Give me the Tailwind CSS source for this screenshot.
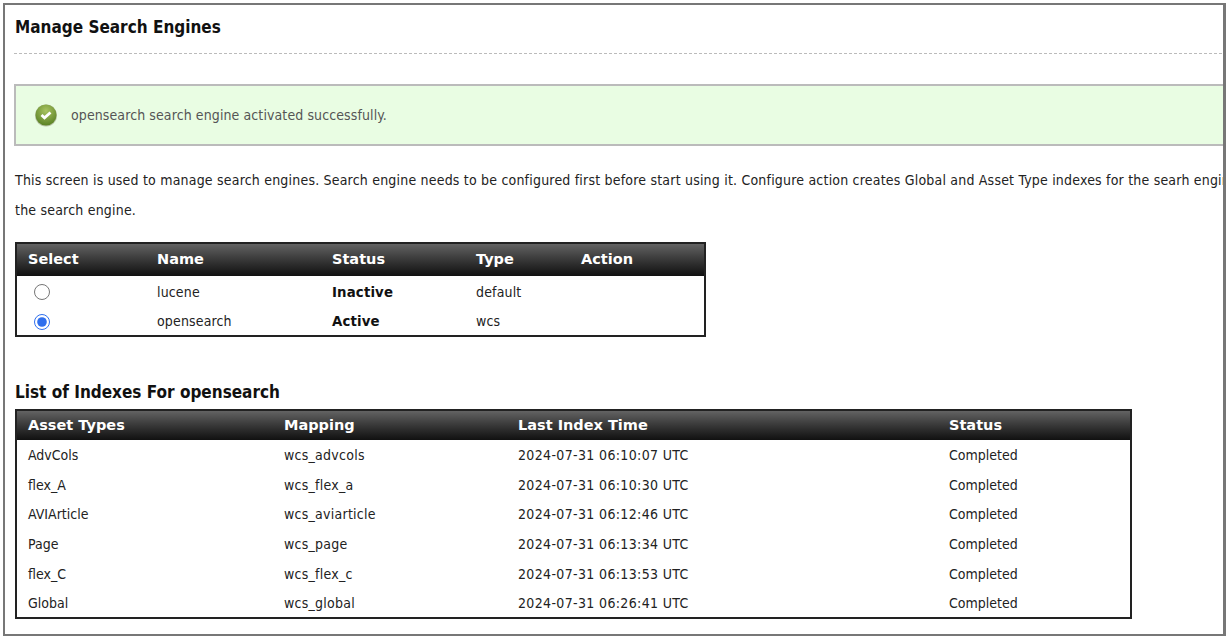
<!DOCTYPE html>
<html lang="en">
<head>
  <meta charset="UTF-8">
  <title>Manage Search Engines</title>
  <script src="https://cdn.jsdelivr.net/npm/@tailwindcss/browser@4"></script>
</head>
<body class="bg-white text-[#222] font-['DejaVu_Sans_Condensed','Liberation_Sans',sans-serif] text-[14px]">
  <!-- Frame -->
  <div class="ml-[3px] mt-[3px] w-[1223px] h-[633px] border-2 border-r-[3px] border-[#777] overflow-hidden">
    <div class="pl-[9px] w-[1400px]">

      <h1 class="h-[49px] w-[1208px] border-b border-dashed border-[#bbb] pl-px pt-[10px] text-[17px] leading-[24px] font-bold text-[#111]">Manage Search Engines</h1>

      <!-- Success message -->
      <div class="mt-[30px] h-[62px] w-[1300px] border-2 border-[#bbb] bg-[#e9fde3] flex items-center pl-[18px] text-[#555]">
        <svg class="w-[24px] h-[24px]" viewBox="0 0 24 24">
          <defs>
            <radialGradient id="ball" cx="50%" cy="30%" r="70%">
              <stop offset="0%" stop-color="#a9c462"/>
              <stop offset="100%" stop-color="#5a8224"/>
            </radialGradient>
          </defs>
          <circle cx="12" cy="12.5" r="11" fill="#b9c4a8"/>
          <circle cx="12" cy="12" r="10.5" fill="url(#ball)"/>
          <path d="M7.5 12l3 2.8L16.5 9.5" fill="none" stroke="#fff" stroke-width="2.8"/>
        </svg>
        <span class="ml-[13px] tracking-[0.1px]">opensearch search engine activated successfully.</span>
      </div>

      <p class="mt-[19px] w-[1400px] pl-px leading-[30px] tracking-[0.2px]">This screen is used to manage search engines. Search engine needs to be configured first before start using it. Configure action creates Global and Asset Type indexes for the searh engine.<br>the search engine.</p>

      <!-- Engines table -->
      <table class="mt-[17px] ml-px w-[691px] table-fixed border-2 border-[#222] border-collapse">
        <thead>
          <tr class="h-[33px] bg-gradient-to-b from-[#666] to-[#111] text-white text-left font-bold font-['DejaVu_Sans',sans-serif] text-[14.5px]">
            <th class="w-[141px] pl-[11px]">Select</th>
            <th class="w-[175px]">Name</th>
            <th class="w-[144px]">Status</th>
            <th class="w-[105px]">Type</th>
            <th>Action</th>
          </tr>
        </thead>
        <tbody class="tracking-[0.15px]">
          <tr class="h-[32px]">
            <td class="pl-[17px]"><input type="radio" name="engine" class="block w-[16px] h-[16px] m-0"></td>
            <td>lucene</td>
            <td class="font-bold text-[14.8px] text-[#111]">Inactive</td>
            <td>default</td>
            <td></td>
          </tr>
          <tr class="h-[28px]">
            <td class="pl-[17px]"><input type="radio" name="engine" checked class="block w-[16px] h-[16px] m-0 accent-[#2f6fed]"></td>
            <td>opensearch</td>
            <td class="font-bold text-[14.8px] text-[#111]">Active</td>
            <td>wcs</td>
            <td></td>
          </tr>
        </tbody>
      </table>

      <h2 class="mt-[43px] ml-px text-[17px] leading-[24px] font-bold text-[#111]">List of Indexes For opensearch</h2>

      <!-- Indexes table -->
      <table class="mt-[5px] ml-px w-[1117px] table-fixed border-2 border-[#222] border-collapse">
        <thead>
          <tr class="h-[30px] bg-gradient-to-b from-[#666] to-[#111] text-white text-left font-bold font-['DejaVu_Sans',sans-serif] text-[14.5px]">
            <th class="w-[268px] pl-[11px]">Asset Types</th>
            <th class="w-[234px]">Mapping</th>
            <th class="w-[431px]">Last Index Time</th>
            <th>Status</th>
          </tr>
        </thead>
        <tbody class="[&>tr]:h-[29.6px] [&_td]:pt-[2px]">
          <tr><td class="pl-[11px]">AdvCols</td><td class="tracking-[0.25px]">wcs_advcols</td><td class="tracking-[0.35px]">2024-07-31 06:10:07 UTC</td><td>Completed</td></tr>
          <tr><td class="pl-[11px]">flex_A</td><td class="tracking-[0.25px]">wcs_flex_a</td><td class="tracking-[0.35px]">2024-07-31 06:10:30 UTC</td><td>Completed</td></tr>
          <tr><td class="pl-[11px]">AVIArticle</td><td class="tracking-[0.25px]">wcs_aviarticle</td><td class="tracking-[0.35px]">2024-07-31 06:12:46 UTC</td><td>Completed</td></tr>
          <tr><td class="pl-[11px]">Page</td><td class="tracking-[0.25px]">wcs_page</td><td class="tracking-[0.35px]">2024-07-31 06:13:34 UTC</td><td>Completed</td></tr>
          <tr><td class="pl-[11px]">flex_C</td><td class="tracking-[0.25px]">wcs_flex_c</td><td class="tracking-[0.35px]">2024-07-31 06:13:53 UTC</td><td>Completed</td></tr>
          <tr><td class="pl-[11px]">Global</td><td class="tracking-[0.25px]">wcs_global</td><td class="tracking-[0.35px]">2024-07-31 06:26:41 UTC</td><td>Completed</td></tr>
        </tbody>
      </table>

    </div>
  </div>
</body>
</html>
